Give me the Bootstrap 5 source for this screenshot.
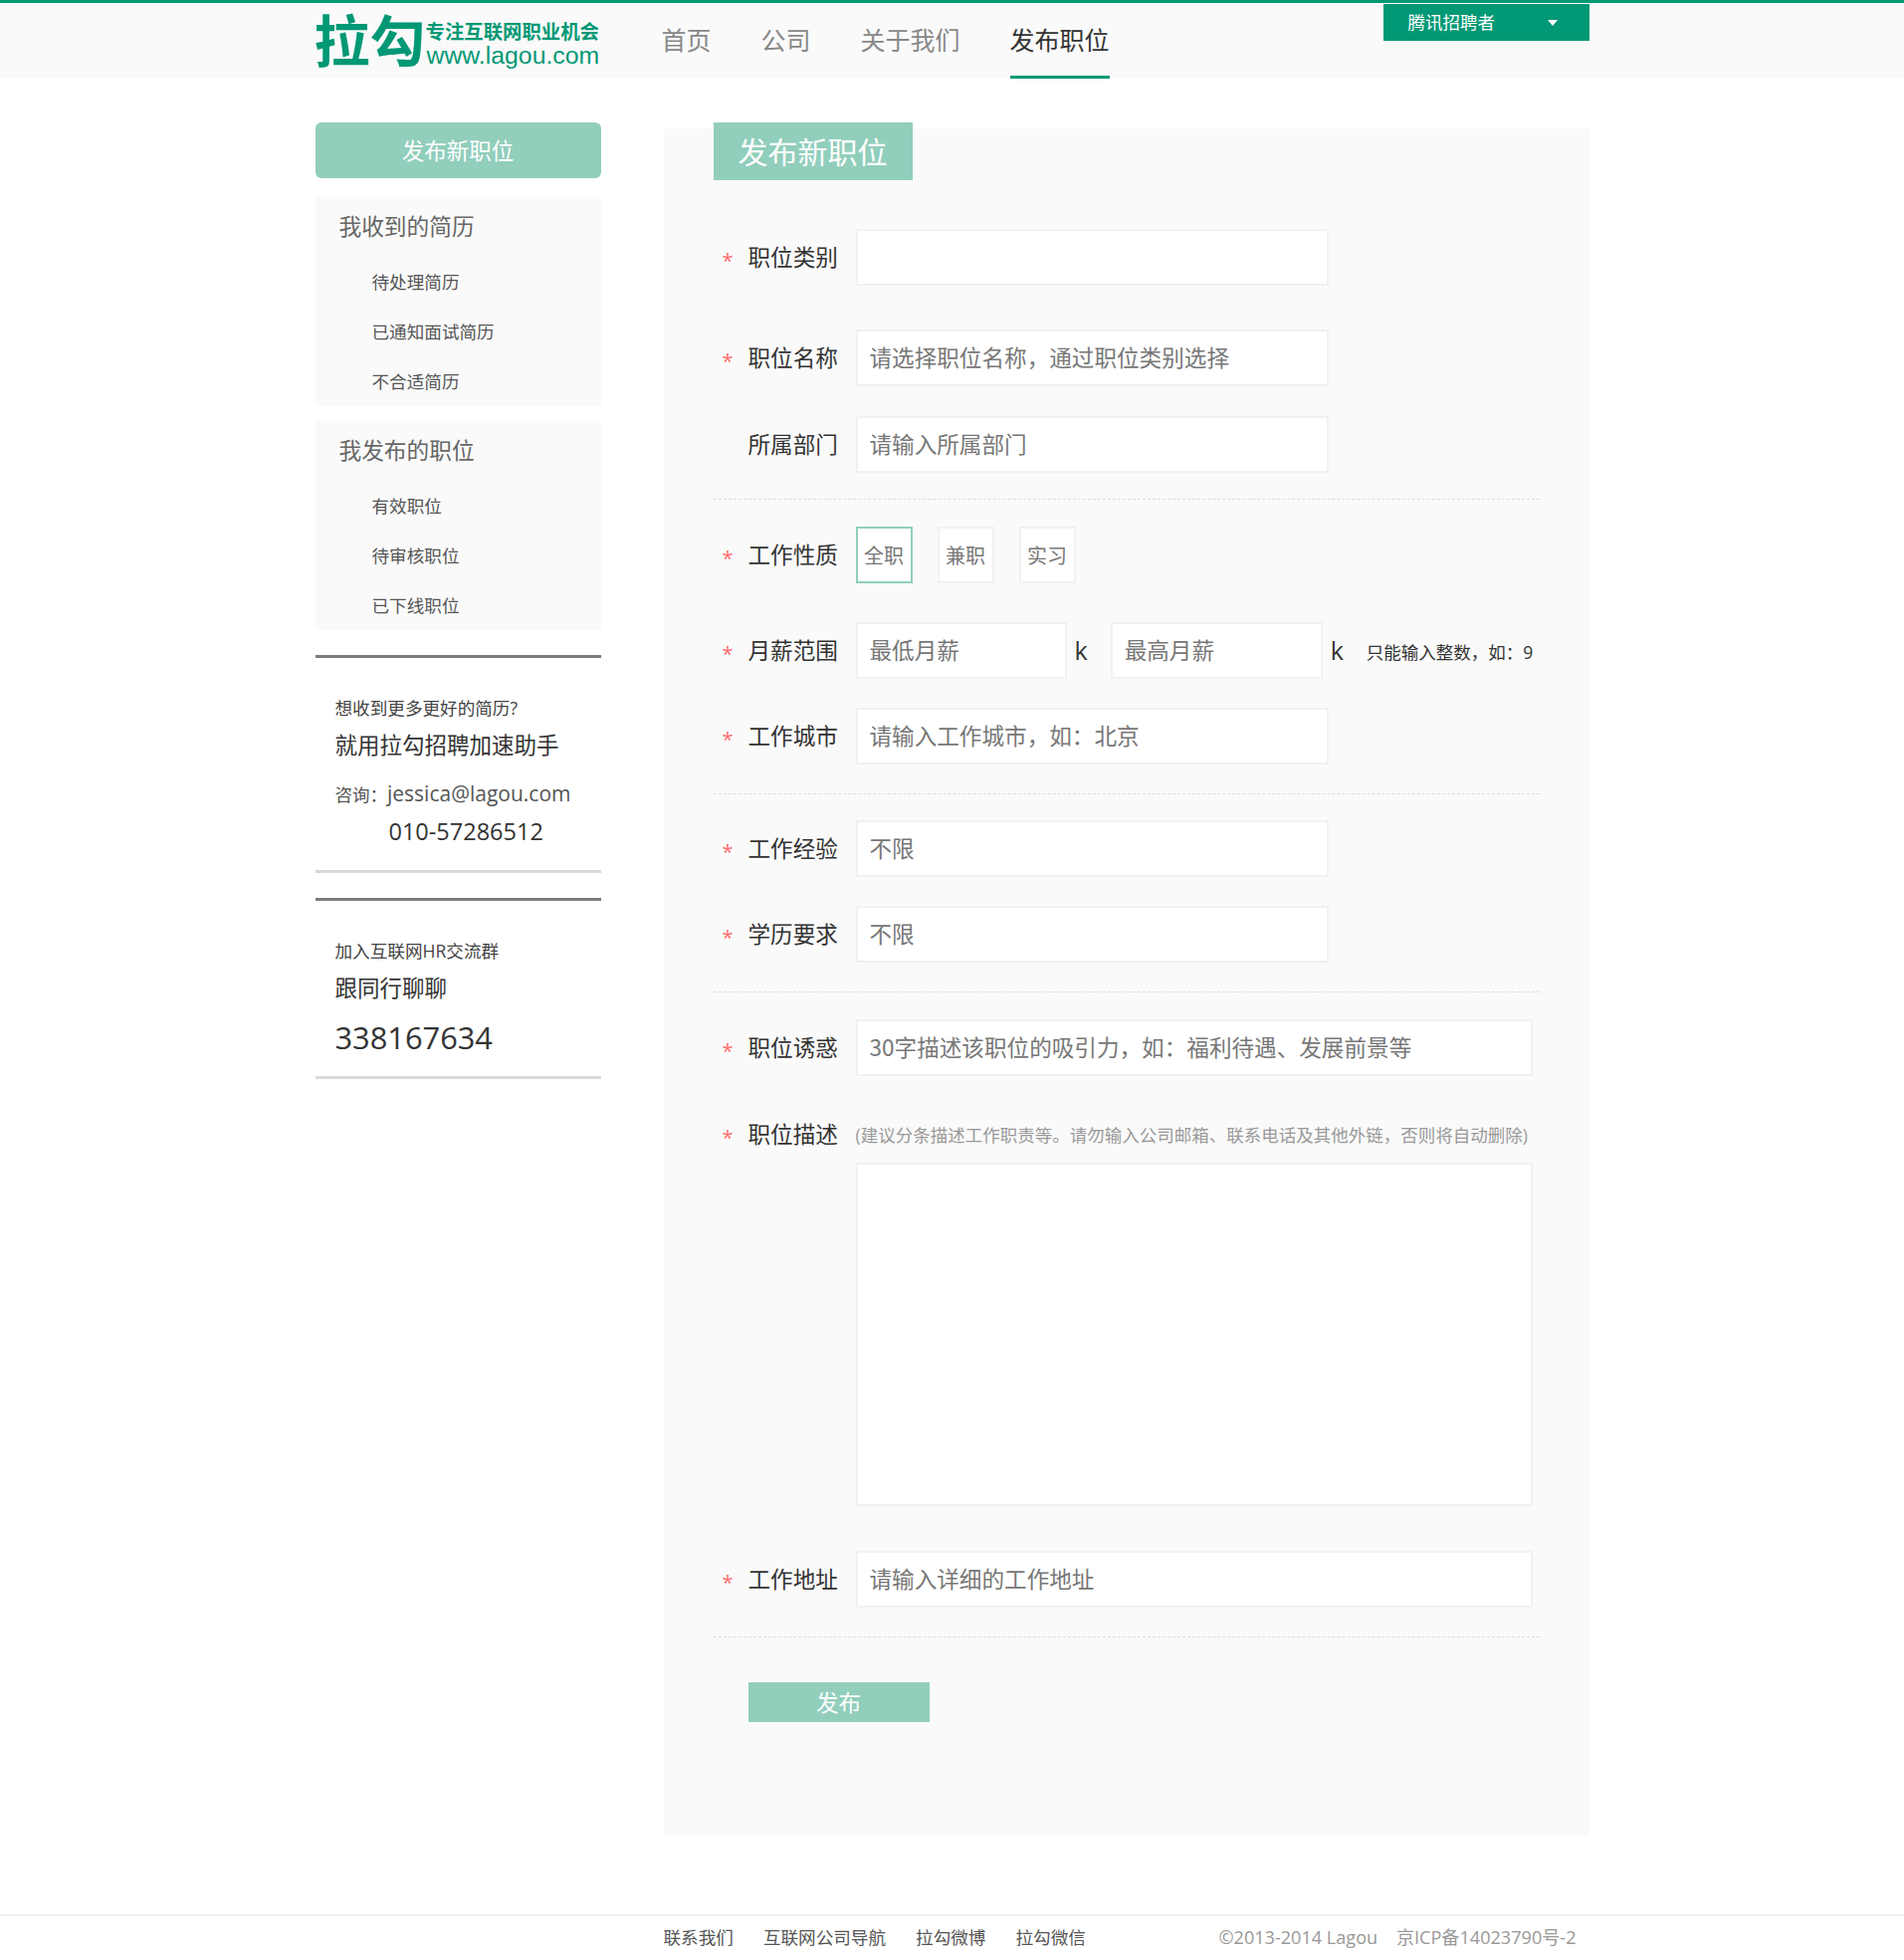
<!DOCTYPE html>
<html lang="zh-CN">
<head>
<meta charset="utf-8">
<title>发布新职位</title>
<link href="https://cdn.jsdelivr.net/npm/bootstrap@5.3.0/dist/css/bootstrap.min.css" rel="stylesheet">
<style>
body{font-family:"Open Sans","Noto Sans CJK SC",sans-serif;color:#333;background:#fff;height:1969px;overflow:hidden}
.wrap-x{width:1280px;margin:0 auto}
.top-head{background:#fafafa;border-top:3px solid #019875;height:79px}
.logo-box{width:287px;color:#019875;text-decoration:none}
.logo-big{font:700 56px/70px "Noto Sans CJK SC",sans-serif;width:111px;white-space:nowrap;margin-left:-1px}
.logo-a{font:700 19.4px/24px "Noto Sans CJK SC",sans-serif;white-space:nowrap;margin-top:16px;margin-left:1px}
.logo-b{font:400 24.8px/26px "Liberation Sans",sans-serif;margin-left:2px}
.main-nav{margin-left:61px}
.main-nav .nav-link{font-size:25px;line-height:73px;padding:0;color:#888;margin-right:50px;border-bottom:3px solid transparent;font-family:"Noto Sans CJK SC",sans-serif}
.main-nav .nav-link.active{color:#333;border-bottom-color:#019875}
.user-btn{width:207px;height:37px;margin-top:1px;background:#019875;color:#fff;border:0;border-radius:0;font-size:17.5px;padding:0 32px 0 25px;--bs-btn-hover-bg:#019875;--bs-btn-hover-color:#fff}
.user-btn::after{border-top-width:6px;border-left-width:5px;border-right-width:5px;margin:0;color:#fff}
.page-body{margin-top:44px}
.side-col{width:287px;margin-right:63px;flex:none}
.side-btn{display:block;height:56px;line-height:58px;background:#91cebc;color:#fff;font-size:22.5px;border:0;padding:0;border-radius:6px;--bs-btn-hover-bg:#91cebc;--bs-btn-hover-color:#fff}
.side-sec{background:#fafafa;margin-top:15px}
.side-sec.first-sec{margin-top:19px}
.side-sec h2{font-size:22.7px;line-height:60px;height:60px;margin:0;padding-left:24px;color:#666;font-weight:400}
.side-sec a{display:block;height:50px;line-height:50px;padding-left:57px;font-size:17.6px;color:#555;text-decoration:none}
.info-box{border-top:3px solid #7a7c7c;border-bottom:3px solid #d9d9d9;margin-top:25px;padding:38px 0 21px 20px}
.info-box.box-two{padding-bottom:17px}
.ln-s{font-size:17.6px;line-height:24px;color:#444}
.ln-m{font-size:22.5px;line-height:36px;margin-top:8px;color:#333}
.ln-mail{font-size:21px;line-height:36px;margin-top:12px;color:#555}
.ln-mail span{font-size:17.5px}
.ln-tel{font-size:23.5px;line-height:36px;margin-top:1px;padding-left:54px;color:#333}
.ln-qq{font-size:30.8px;line-height:44px;margin-top:9px;color:#333}
.form-panel{width:930px;height:1715px;margin-top:6px;background:#fafafa;padding:0 50px}
.panel-title{width:200px;height:58px;margin:-6px 0 0;background:#91cebc;color:#fff;font-size:30px;line-height:60px;text-align:center;font-weight:400}
.f-row{display:flex;align-items:center;margin-top:29px}
.f-lab{width:143px;height:36px;flex:none;display:flex;font-size:22.6px;color:#333;line-height:30px;margin:6px 0 0}
.f-star{width:35px;padding-left:9px;color:#ff6b6b;font-size:20px;line-height:36px}
.f-lab b{font-weight:400}
.f-input.form-control{height:57px;border:2px solid #f1f1f1;border-radius:0;background:#fff;font-size:22.6px;padding:0 12px 3px;color:#777;box-shadow:none;font-family:"Noto Sans CJK SC",sans-serif}
.f-input::placeholder{color:#777;opacity:1}
.w-short{width:475px}
.w-long{width:680px}
.w-sal{width:212px}
.w-sal-b{width:213px}
.f-k{font-size:25px;color:#333;line-height:1}
.k-one{margin:0 23px 0 8px}
.k-two{margin:0 23px 0 8px}
.f-hint{font-size:17.5px;color:#333;white-space:nowrap;margin-top:3px}
.type-btn{width:57px;height:57px;margin-right:25px;padding:2px 0 0;border:2px solid #f1f1f1;border-radius:0;background:#fff;color:#777;font-size:20px;--bs-btn-hover-bg:#fff;--bs-btn-hover-color:#777;--bs-btn-hover-border-color:#f1f1f1}
.type-btn.on{border-color:#91cebc;--bs-btn-hover-border-color:#91cebc}
.dash-line{border:0;border-top:1px dashed #ddd;opacity:1;margin:26px 0 0}
.dash-b{margin-top:29px}
.sp-first{margin-top:49px}
.sp-27{margin-top:27px}
.sp-44{margin-top:44px}
.sp-30{margin-top:30px}
.sp-39{margin-top:39px}
.sp-26{margin-top:26px}
.sp-45{margin-top:45px}
.desc-note{font-size:17.5px;color:#999;white-space:nowrap}
.desc-row{margin-top:44px;height:30px}
.area-x.form-control{display:block;width:680px;height:345px;margin:13px 0 0 143px;border:2px solid #f1f1f1;border-radius:0;resize:none;box-shadow:none}
.send-btn{display:block;width:182px;height:40px;margin:45px 0 0 35px;padding:0;background:#91cebc;color:#fff;font-size:22.5px;line-height:42px;border:0;border-radius:0;--bs-btn-hover-bg:#91cebc;--bs-btn-hover-color:#fff}
.foot-x{margin-top:79px;border-top:2px solid #f1f1f1;height:46px}
.foot-x .wrap-x{padding-left:350px;line-height:42px;font-size:17.6px}
.foot-x a{color:#555;text-decoration:none;margin-right:30px}
.foot-copy{color:#999;margin-left:auto;padding-right:13px;font-size:18.1px}
</style>
</head>
<body>
<header class="top-head">
  <div class="wrap-x d-flex align-items-start">
    <a href="#" class="logo-box d-flex">
      <div class="logo-big">拉勾</div>
      <div><div class="logo-a">专注互联网职业机会</div><div class="logo-b">www.lagou.com</div></div>
    </a>
    <ul class="nav main-nav flex-grow-1">
      <li class="nav-item"><a class="nav-link" href="#">首页</a></li>
      <li class="nav-item"><a class="nav-link" href="#">公司</a></li>
      <li class="nav-item"><a class="nav-link" href="#">关于我们</a></li>
      <li class="nav-item"><a class="nav-link active" href="#">发布职位</a></li>
    </ul>
    <button type="button" class="btn user-btn dropdown-toggle d-flex align-items-center justify-content-between">腾讯招聘者</button>
  </div>
</header>

<div class="wrap-x d-flex align-items-start page-body">
  <aside class="side-col">
    <a href="#" class="btn side-btn w-100">发布新职位</a>
    <div class="side-sec first-sec">
      <h2>我收到的简历</h2>
      <a href="#">待处理简历</a><a href="#">已通知面试简历</a><a href="#">不合适简历</a>
    </div>
    <div class="side-sec">
      <h2>我发布的职位</h2>
      <a href="#">有效职位</a><a href="#">待审核职位</a><a href="#">已下线职位</a>
    </div>
    <div class="info-box">
      <div class="ln-s">想收到更多更好的简历?</div>
      <div class="ln-m">就用拉勾招聘加速助手</div>
      <div class="ln-mail"><span>咨询&#65306;</span>jessica@lagou.com</div>
      <div class="ln-tel">010-57286512</div>
    </div>
    <div class="info-box box-two">
      <div class="ln-s">加入互联网HR交流群</div>
      <div class="ln-m">跟同行聊聊</div>
      <div class="ln-qq">338167634</div>
    </div>
  </aside>

  <main class="form-panel">
    <h1 class="panel-title">发布新职位</h1>
    <form>
      <div class="f-row sp-first"><label class="f-lab"><span class="f-star">*</span><b>职位类别</b></label><input class="form-control f-input w-short"></div>
      <div class="f-row sp-44"><label class="f-lab"><span class="f-star">*</span><b>职位名称</b></label><input class="form-control f-input w-short" placeholder="请选择职位名称&#65292;通过职位类别选择"></div>
      <div class="f-row sp-30"><label class="f-lab"><span class="f-star"></span><b>所属部门</b></label><input class="form-control f-input w-short" placeholder="请输入所属部门"></div>
      <hr class="dash-line">
      <div class="f-row sp-27"><label class="f-lab"><span class="f-star">*</span><b>工作性质</b></label>
        <button type="button" class="btn type-btn on">全职</button><button type="button" class="btn type-btn">兼职</button><button type="button" class="btn type-btn">实习</button></div>
      <div class="f-row sp-39"><label class="f-lab"><span class="f-star">*</span><b>月薪范围</b></label>
        <input class="form-control f-input w-sal" placeholder="最低月薪"><span class="f-k k-one">k</span><input class="form-control f-input w-sal-b" placeholder="最高月薪"><span class="f-k k-two">k</span><span class="f-hint">只能输入整数&#65292;如&#65306;9</span></div>
      <div class="f-row"><label class="f-lab"><span class="f-star">*</span><b>工作城市</b></label><input class="form-control f-input w-short" placeholder="请输入工作城市&#65292;如&#65306;北京"></div>
      <hr class="dash-line dash-b">
      <div class="f-row sp-26"><label class="f-lab"><span class="f-star">*</span><b>工作经验</b></label><input class="form-control f-input w-short" value="不限"></div>
      <div class="f-row"><label class="f-lab"><span class="f-star">*</span><b>学历要求</b></label><input class="form-control f-input w-short" value="不限"></div>
      <hr class="dash-line dash-b">
      <div class="f-row sp-27"><label class="f-lab"><span class="f-star">*</span><b>职位诱惑</b></label><input class="form-control f-input w-long" placeholder="30字描述该职位的吸引力&#65292;如&#65306;福利待遇、发展前景等"></div>
      <div class="f-row desc-row"><label class="f-lab"><span class="f-star">*</span><b>职位描述</b></label><span class="desc-note">(建议分条描述工作职责等。请勿输入公司邮箱、联系电话及其他外链&#65292;否则将自动删除)</span></div>
      <textarea class="form-control area-x"></textarea>
      <div class="f-row sp-45"><label class="f-lab"><span class="f-star">*</span><b>工作地址</b></label><input class="form-control f-input w-long" placeholder="请输入详细的工作地址"></div>
      <hr class="dash-line dash-b">
      <button type="button" class="btn send-btn">发布</button>
    </form>
  </main>
</div>

<footer class="foot-x">
  <div class="wrap-x d-flex">
    <a href="#">联系我们</a><a href="#">互联网公司导航</a><a href="#">拉勾微博</a><a href="#">拉勾微信</a>
    <span class="foot-copy">©2013-2014 Lagou&nbsp;&nbsp;&nbsp; 京ICP备14023790号-2</span>
  </div>
</footer>
<script src="https://cdn.jsdelivr.net/npm/bootstrap@5.3.0/dist/js/bootstrap.bundle.min.js"></script>
</body>
</html>
